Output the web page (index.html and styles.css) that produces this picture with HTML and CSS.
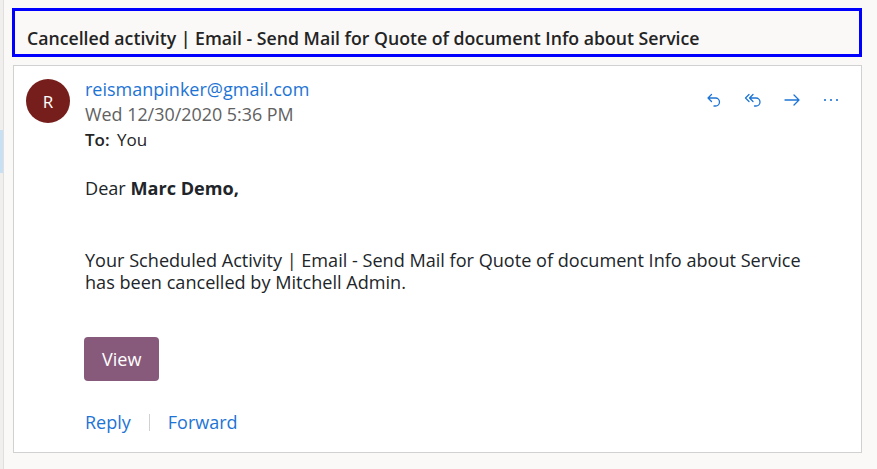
FILE: index.html
```html
<!DOCTYPE html>
<html>
<head>
<meta charset="utf-8">
<link rel="stylesheet" href="styles.css">
</head>
<body>
<div class="page">
  <div class="rail"><div class="rail-sel"></div></div>
  <div class="main">
    <div class="subject">Cancelled activity | Email - Send Mail for Quote of document Info about Service</div>
    <div class="card">
      <div class="head">
        <div class="avatar">R</div>
        <div class="meta">
          <div class="from">reismanpinker@gmail.com</div>
          <div class="date">Wed 12/30/2020 5:36 PM</div>
          <div class="to"><span class="to-label">To:</span> You</div>
        </div>
        <div class="actions">
          <svg class="icon" viewBox="0 0 20 20"><path d="M7.5 4.5 L4 8 L7.5 11.5 M4 8 H11.5 A4 4 0 0 1 11.5 16 H10" fill="none" stroke="currentColor" stroke-width="1.3" stroke-linecap="round" stroke-linejoin="round"/></svg>
          <svg class="icon" viewBox="0 0 20 20"><path d="M6 4.5 L2.5 8 L6 11.5 M10 4.5 L6.5 8 L10 11.5 M6.5 8 H13 A4 4 0 0 1 13 16 H11.5" fill="none" stroke="currentColor" stroke-width="1.3" stroke-linecap="round" stroke-linejoin="round"/></svg>
          <svg class="icon" viewBox="0 0 20 20"><path d="M3 10 H17 M12 5 L17 10 L12 15" fill="none" stroke="currentColor" stroke-width="1.3" stroke-linecap="round" stroke-linejoin="round"/></svg>
          <svg class="icon" viewBox="0 0 20 20"><circle cx="4" cy="10" r="1.1" fill="currentColor"/><circle cx="10" cy="10" r="1.1" fill="currentColor"/><circle cx="16" cy="10" r="1.1" fill="currentColor"/></svg>
        </div>
      </div>
      <div class="body">
        <p class="greet">Dear <b>Marc Demo,</b></p>
        <p class="msg">Your Scheduled Activity | Email - Send Mail for Quote of document Info about Service<br>has been cancelled by Mitchell Admin.</p>
        <div class="btn-row"><span class="btn">View</span></div>
      </div>
      <div class="footer">
        <span class="link">Reply</span>
        <span class="sep"></span>
        <span class="link">Forward</span>
      </div>
    </div>
  </div>
</div>
</body>
</html>
```
FILE: styles.css
```css
html, body {
  margin: 0;
  padding: 0;
  background: #faf9f8;
}
body {
  width: 877px;
  height: 469px;
  overflow: hidden;
  font-family: "Open Sans", "Noto Sans", sans-serif;
}
.page {
  display: flex;
  height: 469px;
}
.rail {
  width: 3px;
  background: #f0efee;
  border-right: 1px solid #e1dfdd;
  flex: none;
  padding-top: 130px;
  box-sizing: content-box;
}
.rail-sel {
  width: 3px;
  height: 43px;
  background: #c7e0f4;
}
.main {
  flex: none;
  width: 850px;
  margin-left: 8px;
  padding-top: 8px;
}
.subject {
  height: 37px;
  padding: 0 0 6px 12px;
  border: 3px solid #0000ff;
  box-sizing: content-box;
  font-size: 17.7px;
  font-weight: 600;
  color: #242424;
  line-height: 20px;
  display: flex;
  align-items: flex-end;
}
.card {
  margin-top: 8px;
  margin-left: 1px;
  width: 847px;
  height: 386px;
  background: #ffffff;
  border: 1px solid #d1d1d1;
  display: flex;
  flex-direction: column;
}
.head {
  display: flex;
  padding: 13px 0 0 12px;
}
.avatar {
  width: 44px;
  height: 44px;
  border-radius: 50%;
  background: #761e1b;
  color: #fff;
  font-size: 17px;
  display: flex;
  align-items: center;
  justify-content: center;
  margin-right: 15px;
  flex: none;
}
.meta {
  flex: 1;
  color: #242424;
  font-size: 17px;
  line-height: 25px;
}
.from {
  color: #1e74d4;
  font-size: 18px;
  margin-top: -3px;
  line-height: 26px;
}
.date {
  color: #616161;
  font-size: 17.9px;
  line-height: 25px;
}
.to-label {
  font-weight: 600;
  margin-right: 3px;
}
.actions {
  display: flex;
  gap: 19px;
  padding: 11px 20px 0 0;
  color: #1e74d4;
}
.icon {
  width: 20px;
  height: 20px;
}
.body {
  padding: 0 0 0 71px;
  color: #212529;
  font-size: 18.1px;
  line-height: 22px;
}
.greet {
  margin: 25px 0 0 0;
}
.msg {
  margin: 50px 0 0 0;
}
.btn-row {
  margin-top: 44px;
  margin-left: -1px;
}
.btn {
  display: inline-block;
  background: #875a7b;
  color: #fff;
  border-radius: 4px;
  padding: 10px 18px;
  font-size: 18px;
  line-height: 24px;
}
.footer {
  display: flex;
  align-items: center;
  padding: 29px 0 0 71px;
  font-size: 18px;
  color: #1e74d4;
}
.sep {
  width: 1px;
  height: 17px;
  background: #d1d1d1;
  margin: 0 18px;
}
.link { font-weight: 500; }
```
